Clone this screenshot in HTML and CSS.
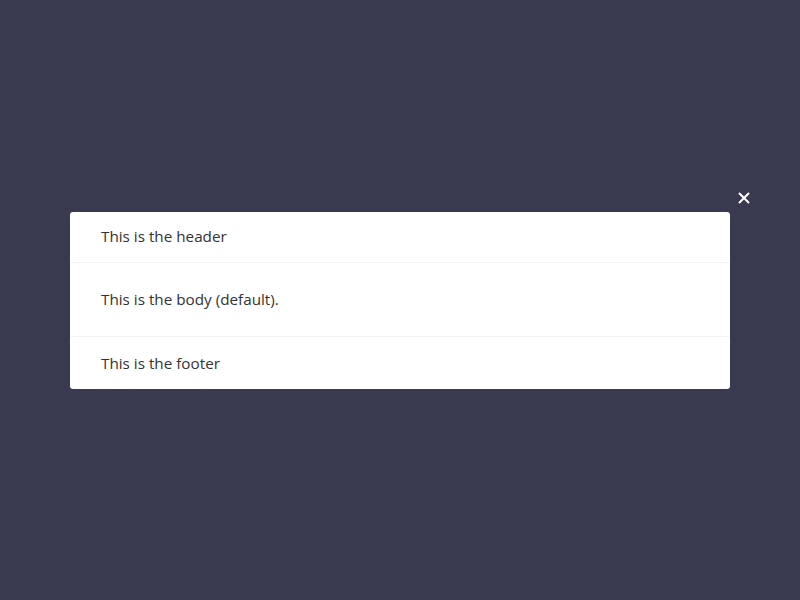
FILE: index.html
```html
<!DOCTYPE html>
<html>
<head>
<meta charset="utf-8">
<link rel="stylesheet" href="styles.css">
</head>
<body>
<div class="overlay">
  <div class="wrap">
    <button class="close" aria-label="Close">
      <svg width="12" height="12" viewBox="0 0 12 12"><path d="M1 1L11 11M11 1L1 11" stroke="#fff" stroke-width="2" stroke-linecap="butt"/></svg>
    </button>
    <div class="modal">
      <div class="header">This is the header</div>
      <div class="body">This is the body (default).</div>
      <div class="footer">This is the footer</div>
    </div>
  </div>
</div>
</body>
</html>
```
FILE: styles.css
```css
html, body {
  margin: 0;
  padding: 0;
  height: 100%;
}
body {
  background: #393a4f;
  font-family: "Open Sans", sans-serif;
  color: #333;
}
.overlay {
  height: 100%;
  display: flex;
  justify-content: center;
  align-items: flex-start;
  padding-top: 212px;
  box-sizing: border-box;
}
.wrap {
  position: relative;
  width: 660px;
}
.close {
  position: absolute;
  right: -21px;
  top: -21px;
  width: 14px;
  height: 14px;
  padding: 0;
  border: 0;
  background: transparent;
  display: flex;
  align-items: center;
  justify-content: center;
}
.modal {
  background: #fff;
  border-radius: 3px;
  font-size: 15.25px;
  line-height: 22px;
}
.header {
  padding: 13px 31px 15px;
  border-bottom: 1px solid #f4f4f5;
}
.body {
  padding: 25px 31px 26px;
  border-bottom: 1px solid #f4f4f5;
}
.footer {
  padding: 15px 31px 15px;
}
```
